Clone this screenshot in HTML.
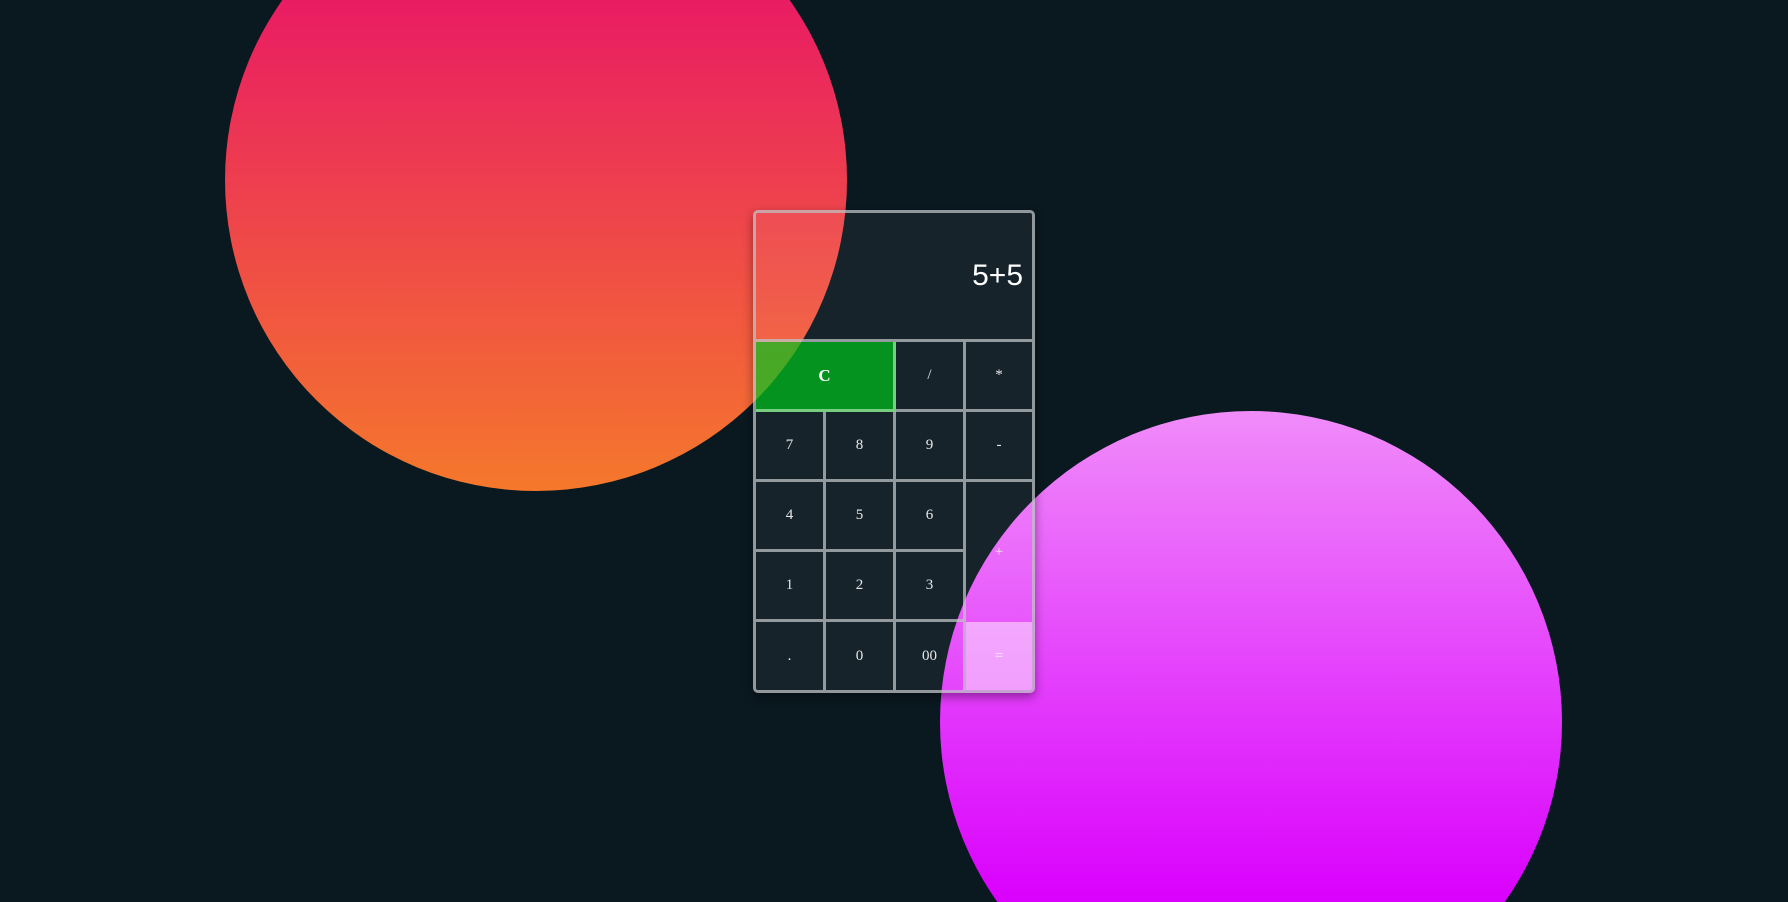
<!DOCTYPE html>
<html><head><meta charset="utf-8"><style>
html,body{margin:0;padding:0;width:1788px;height:902px;overflow:hidden;background:#0a1820;}
#wrap{position:relative;width:1788px;height:902px;overflow:hidden;background:#0a1820;}
.c{position:absolute;border-radius:50%;}
#o{left:225px;top:-131px;width:622px;height:622px;background:linear-gradient(#e91c63 21%,#f5782c 100%);}
#ph{position:absolute;left:940px;top:411px;width:622px;height:491px;overflow:hidden;}
#p{left:0;top:0;width:622px;height:622px;background:linear-gradient(#f08cfa 0%,#da00fd 79%);}
#calc{position:absolute;left:753px;top:210px;width:276px;height:477px;border:3px solid rgba(190,195,198,.75);border-radius:5px;
 display:grid;grid-template-columns:70px 70px 70px 66px;grid-template-rows:129px 70px 70px 70px 70px 68px;box-shadow:0 4px 10px rgba(0,0,0,.4);overflow:hidden}
#calc div{box-sizing:border-box;background:rgba(255,255,255,.05);color:#e8e8e8;font-family:"Liberation Serif",serif;font-size:15px;display:flex;align-items:center;justify-content:center;border-right:3px solid rgba(190,195,198,.75);border-bottom:3px solid rgba(190,195,198,.75)}
#calc div.r{border-right:none}
#calc div.b{border-bottom:none}
#calc .d{grid-column:1/5;justify-content:flex-end;padding-right:9px;font-family:"Liberation Sans",sans-serif;font-size:30px;color:#fff;border-right:none}
#calc .g{grid-column:1/3;background:rgba(0,200,30,.7);color:#fff;font-size:17px;font-weight:bold;border-color:rgba(170,230,170,.7)}
#calc .pl{grid-row:4/6;grid-column:4;border-bottom:none}
#calc .eq{background:rgba(255,255,255,.5);color:rgba(255,255,255,.8)}
</style></head><body><div id="wrap">
<div class="c" id="o"></div><div id="ph"><div class="c" id="p"></div></div>
<div id="calc">
<div class="d">5+5</div>
<div class="g">C</div><div>/</div><div class="r">*</div>
<div>7</div><div>8</div><div>9</div><div class="r">-</div>
<div>4</div><div>5</div><div>6</div><div class="pl r">+</div>
<div>1</div><div>2</div><div>3</div>
<div class="b">.</div><div class="b">0</div><div class="b">00</div><div class="eq r b">=</div>
</div>
</div></body></html>
